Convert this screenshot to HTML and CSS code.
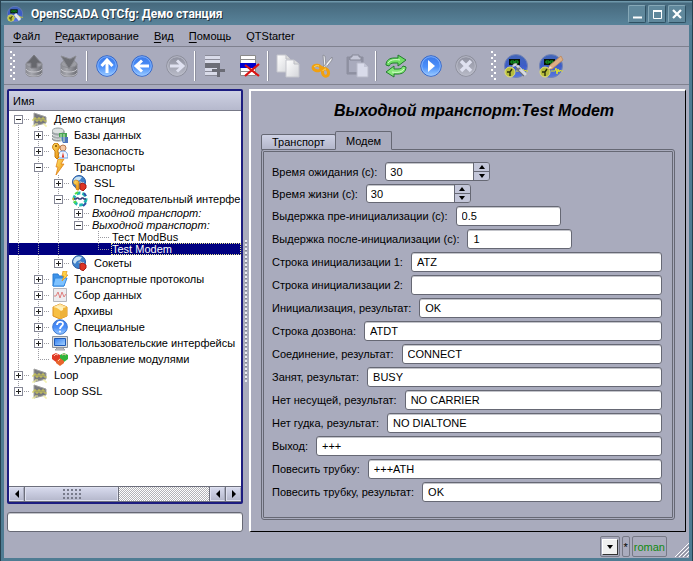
FILE: index.html
```html
<!DOCTYPE html>
<html lang="ru">
<head>
<meta charset="utf-8">
<title>OpenSCADA QTCfg: Демо станция</title>
<link rel="stylesheet" href="styles.css">
</head>
<body>
<svg class="defs" aria-hidden="true">
  <defs>
    <linearGradient id="blue" x1="0" y1="0" x2="0" y2="1"><stop offset="0" stop-color="#3a78e8"/><stop offset=".55" stop-color="#4c90fa"/><stop offset="1" stop-color="#9cccff"/></linearGradient>
    <linearGradient id="grey" x1="0" y1="0" x2="0" y2="1"><stop offset="0" stop-color="#8d8f9e"/><stop offset="1" stop-color="#b9bbc8"/></linearGradient>
    <linearGradient id="dark" x1="0" y1="0" x2="1" y2="0"><stop offset="0" stop-color="#8a8b92"/><stop offset=".35" stop-color="#a6a7ae"/><stop offset="1" stop-color="#6c6d74"/></linearGradient>
    <linearGradient id="paper" x1="0" y1="0" x2="1" y2="1"><stop offset="0" stop-color="#ffffff"/><stop offset="1" stop-color="#d4d5da"/></linearGradient>
    <linearGradient id="orb" x1="0" y1="0" x2="0" y2="1"><stop offset="0" stop-color="#4266b8"/><stop offset=".5" stop-color="#3c5cc8"/><stop offset="1" stop-color="#5878e0"/></linearGradient>
    <linearGradient id="gold" x1="0" y1="0" x2="1" y2="1"><stop offset="0" stop-color="#ffe46a"/><stop offset="1" stop-color="#e88a08"/></linearGradient>
    <linearGradient id="screen" x1="0" y1="0" x2="1" y2="1"><stop offset="0" stop-color="#2e7cf0"/><stop offset="1" stop-color="#a8d4ff"/></linearGradient>
  </defs>
  <symbol id="i-db" viewBox="0 0 22 22">
    <path d="M3 9v9c0 2 3 4 8 4s8-2 8-4V9z" fill="url(#dark)" stroke="#8b8c93"/>
    <path d="M3 14c1 2 4 3 8 3s7-1 8-3" fill="none" stroke="#c6c6cc"/><path d="M3 18c1 2 4 3 8 3s7-1 8-3" fill="none" stroke="#b4b4bb"/>
    <ellipse cx="11" cy="9" rx="8" ry="3.500" fill="#9c9da4" stroke="#8b8c93"/>
  </symbol>
  <symbol id="i-orb" viewBox="0 0 24 24">
    <circle cx="12" cy="12" r="11.500" fill="url(#orb)" stroke="#7384b4"/>
    <rect x="5" y="5" width="11" height="6" fill="#071407"/><path d="M7 7h3v2H7zM11 7h3v2h-3z" fill="none" stroke="#16a826"/>
    <path d="M12 17h4l1-3 1 6 1-5 1 3 1-2 1 1h2" fill="none" stroke="#e3e228"/>
    <circle cx="6" cy="18" r="5" fill="#b6bd3c" stroke="#e0df75"/><path d="M3 18h3l2-3M6 18v4" stroke="#28300c" stroke-width="1.400" fill="none"/>
  </symbol>
  <symbol id="i-station" viewBox="0 0 16 16">
    <path d="M2 2l12 4v6L2 15z" fill="#78797c" stroke="#a1a1a0"/><path d="M0 9h2V7l2 0v3h2V7h2v3h2V7h2v3h3" fill="none" stroke="#d0cc50"/><path d="M0 15h3v-2h3M11 13h2v2h2" fill="none" stroke="#f0ee9a"/>
  </symbol>
  <symbol id="i-bases" viewBox="0 0 16 16">
    <path d="M0 4v7c0 2 2 3 6 3s6-1 6-3V4z" fill="#a7acaf" stroke="#84898b"/><ellipse cx="6" cy="4" rx="6" ry="3" fill="#dde1e1" stroke="#96a0a0"/><path d="M0 7c2 3 9 3 12 0M0 10c2 3 9 3 12 0" fill="none" stroke="#e7eaea"/>
    <path d="M7 6h8v4H7z" fill="#48a353"/><path d="M8 10h8v6h-5z" fill="#4e76bd"/><path d="M9 7v7M12 7v8" stroke="#d1edc7"/>
  </symbol>
  <symbol id="i-security" viewBox="0 0 16 16">
    <circle cx="11" cy="5" r="3" fill="#f5c8a4" stroke="#b97a50"/><path d="M6 15c0-5 2-7 5-7s5 2 5 7z" fill="#edf4ff" stroke="#6d9fdd"/><path d="M11 9l-1 5 1 1 1-1z" fill="#e02d18"/>
    <path d="M4 0a4 4 0 0 0-2 7l1 1v6l2 2 2-2-1-2 1-1-1-2V7a4 4 0 0 0-2-7z" fill="url(#gold)" stroke="#c77a0a"/><circle cx="4" cy="3" r="1" fill="#7a4b00"/>
  </symbol>
  <symbol id="i-bolt" viewBox="0 0 16 16"><path d="M6 0h6L9 5h3L4 16l2-8H4z" fill="url(#gold)" stroke="#df8216" stroke-width=".800"/></symbol>
  <symbol id="i-globe" viewBox="0 0 16 16">
    <circle cx="7" cy="7" r="6.500" fill="#3d80cb" stroke="#28579c"/><path d="M2 4c2-3 5-3 8-2L8 5 5 6 3 9 1 7zM8 8l4-1c0 2-1 4-2 5z" fill="#c9e2f3"/>
    <path d="M8 9l3-1 3 2v3l-3 3-3-2z" fill="#dd3424" stroke="#a81c14"/><path d="M10 8c-1-2-3-1-3 0" stroke="#f1d0ad" fill="none"/>
  </symbol>
  <symbol id="i-sslglobe" viewBox="0 0 16 16"><use href="#i-globe"/><path d="M2 6a3 3 0 0 1 5 3v6H5l-1-1v-4a3 3 0 0 1-2-4z" fill="url(#gold)" stroke="#c27817" stroke-width=".700"/></symbol>
  <symbol id="i-serial" viewBox="0 0 16 16">
    <circle cx="8" cy="8" r="6" fill="#fff" stroke="#20b8b0" stroke-width="3" stroke-dasharray="4 2"/><path d="M3 3l3-2M2 12l2-2" stroke="#5adc42" stroke-width="2"/><path d="M12 2l2 3M11 15l3-3" stroke="#2b53a9" stroke-width="2"/><path d="M2 8h2l1-1h1l1 1h2l1-1h1l1 1h2" fill="none" stroke="#343474" stroke-width="1.500"/><path d="M0 8l2-2v4z" fill="#cfb627"/>
  </symbol>
  <symbol id="i-folder" viewBox="0 0 16 16"><path d="M1 3h5l1 2h5v10H1z" fill="#3e92e8" stroke="#287dd4"/><path d="M3 7h12l-3 8H1z" fill="#7ec2ff" stroke="#3388df"/><path d="M11 0h4l-1 4h2l-6 6 2-5h-2z" fill="#ffd247" stroke="#e19115" stroke-width=".700"/></symbol>
  <symbol id="i-chart" viewBox="0 0 16 16"><path d="M1.500 1.500h13v13h-13z" fill="#ececef" stroke="#b4b5bb"/><path d="M2 9h2l2-4 2 6 2-6 2 5 2-3" fill="none" stroke="#e08080"/></symbol>
  <symbol id="i-box" viewBox="0 0 16 16"><path d="M1 4l7-3 7 3v9l-7 3-7-3z" fill="#f7bf44" stroke="#da9020"/><path d="M1 4l7-3 7 3-7 2z" fill="#ffe5a0"/><path d="M8 7v9l7-3V4z" fill="#eeb23a"/><path d="M5 3l6 1v3l-2 1-5-4z" fill="#fff1bf"/></symbol>
  <symbol id="i-help" viewBox="0 0 16 16"><circle cx="8" cy="8" r="7.300" fill="url(#blue)" stroke="#3c78d0"/><path d="M5 6c0-4 6-4 6-1 0 2-3 2-3 5" fill="none" stroke="#fff" stroke-width="1.800"/><circle cx="8" cy="12.500" r="1" fill="#fff"/></symbol>
  <symbol id="i-screen" viewBox="0 0 16 16"><path d="M.5 1.500h15v11H.5z" fill="#d7dbdf" stroke="#8a9098"/><path d="M2.500 3.500h11v7h-11z" fill="url(#screen)" stroke="#1c59b8"/><path d="M5 13h6l2 2H3z" fill="#c9cbd0" stroke="#9a9ca2"/></symbol>
  <symbol id="i-modules" viewBox="0 0 16 16"><path d="M0 4l4-2 4 2v4L4 11 0 8z" fill="#e03a26"/><path d="M8 4l4-2 4 2v4l-4 3-4-3z" fill="#2fb43a"/><path d="M4 10l4-3 4 3v2l-4 3-4-3z" fill="#e8642c"/><path d="M2 5l2-2 2 1M10 4l2-1 2 1M6 10l2-2" stroke="#ffc6ae" fill="none"/></symbol>
</svg>

<div class="window">
  <header class="titlebar">
    <svg class="appicon"><use href="#i-orb"/><path d="M8 8l5 6" stroke="#e2e5ec" stroke-width="3"/></svg>
    <h1>OpenSCADA QTCfg: Демо станция</h1>
    <div class="winbtns">
      <button aria-label="Свернуть"><svg viewBox="0 0 16 16"><path d="M4 11.500h9" stroke="#fff" stroke-width="2"/></svg></button>
      <button aria-label="Развернуть"><svg viewBox="0 0 16 16"><path d="M4.500 4.500h8v8h-8z" fill="none" stroke="#fff"/><path d="M4 5h9" stroke="#fff" stroke-width="2"/></svg></button>
      <button aria-label="Закрыть"><svg viewBox="0 0 16 16"><path d="M4 4l8 8M12 4l-8 8" stroke="#fff" stroke-width="2.200"/></svg></button>
    </div>
  </header>

  <nav class="menubar">
    <button><u>Ф</u>айл</button><button><u>Р</u>едактирование</button><button><u>В</u>ид</button><button><u>П</u>омощь</button><button>QTStarter</button>
  </nav>

  <div class="toolbar">
    <i class="handle"></i>
    <button aria-label="Загрузить"><svg viewBox="0 0 22 22"><use href="#i-db"/><path d="M11 0l7 8h-4v5H8V8H4z" fill="#66676d" stroke="#7c7d83"/></svg></button>
    <button aria-label="Сохранить"><svg viewBox="0 0 22 22"><use href="#i-db"/><path d="M3 1l6 2 3 1 6-3-2 5-5 8-5-8z" fill="#6e6f75" stroke="#8b8c92"/></svg></button>
    <i class="sep"></i>
    <button aria-label="Вверх"><svg viewBox="0 0 22 22"><circle cx="11" cy="11" r="10.300" fill="url(#blue)" stroke="#3567c9"/><circle cx="11" cy="11" r="9.300" fill="none" stroke="#9ac5ff" stroke-opacity=".7"/><path d="M11 18V6M5.500 11L11 5l5.500 6" fill="none" stroke="#fff" stroke-width="3"/></svg></button>
    <button aria-label="Назад"><svg viewBox="0 0 22 22"><circle cx="11" cy="11" r="10.300" fill="url(#blue)" stroke="#3567c9"/><circle cx="11" cy="11" r="9.300" fill="none" stroke="#9ac5ff" stroke-opacity=".7"/><path d="M18 11H6M11 5.500L5 11l6 5.500" fill="none" stroke="#fff" stroke-width="3"/></svg></button>
    <button aria-label="Вперёд"><svg viewBox="0 0 22 22"><circle cx="11" cy="11" r="10.300" fill="url(#grey)" stroke="#8d8f9c"/><circle cx="11" cy="11" r="9.300" fill="none" stroke="#b9bbc9"/><path d="M4 11h12M11 5.500l6 5.500-6 5.500" fill="none" stroke="#dfe1f0" stroke-width="3"/></svg></button>
    <i class="sep"></i>
    <button aria-label="Добавить"><svg viewBox="0 0 22 22"><path d="M1 0h15v21H1z" fill="#d9dbe9"/><path d="M1 .5h15M1 4.500h15M1 16.500h15M1 20.500h15" stroke="#8b8c99"/><path d="M1 8h15v5H1z" fill="#6c6d77"/><path d="M8 15.500h13M14.500 9v13" stroke="#6b6c76" stroke-width="3"/></svg></button>
    <button aria-label="Удалить"><svg viewBox="0 0 22 22"><path d="M1.500 .5h15v20h-15zM1 4.500h15M1 16.500h15" fill="#fff" stroke="#8b8b8b"/><path d="M1 8h16v5H1z" fill="#0000cd"/><path d="M6 10l14 11M20 9L6 21" stroke="#dc1212" stroke-width="2.200"/></svg></button>
    <i class="sep"></i>
    <button aria-label="Копировать"><svg viewBox="0 0 22 22"><path d="M0 0h9l4 4v13H0z" fill="url(#paper)" stroke="#c5c6cd"/><path d="M9 0v4h4" fill="#ddd" stroke="#bcbdc4"/><path d="M9 5h8l5 4v13H9z" fill="url(#paper)" stroke="#c5c6cd"/><path d="M17 5v4h5" fill="#ddd" stroke="#bcbdc4"/></svg></button>
    <button aria-label="Вырезать"><svg viewBox="0 0 22 22"><path d="M11 0l2 1 1 10-2 3zM20 2l0 3-7 9-2-2z" fill="#f0f1f5" stroke="#858890" stroke-width=".8"/><ellipse cx="5" cy="13" rx="4" ry="2.800" fill="none" stroke="#f0a010" stroke-width="3" transform="rotate(10 5 13)"/><ellipse cx="13.500" cy="17.500" rx="3" ry="3.800" fill="none" stroke="#f0a010" stroke-width="3" transform="rotate(-15 13.500 17.500)"/><path d="M8 12l5 2" stroke="#f0a010" stroke-width="3"/><path d="M2 12c1-1 3-2 5-1M11 16c0-1 1-2 3-2" stroke="#ffdc60" fill="none"/></svg></button>
    <button aria-label="Вставить"><svg viewBox="0 0 22 22"><path d="M0 2h16v17H0z" fill="#9092a3" stroke="#8c8e9e"/><path d="M2 5h12v12H2z" fill="#a9abbd"/><path d="M5 0h7v2h2v3H3V2h2z" fill="#c5c7d7" stroke="#868897"/><path d="M10 8h7l4 4v10H10z" fill="#d9dbea" stroke="#b8bac9"/><path d="M17 8v4h4" fill="#c3c5d6"/></svg></button>
    <i class="sep"></i>
    <button aria-label="Обновить"><svg viewBox="0 0 22 22"><path d="M1 10c0-5 4-7 8-7h4V0l8 5-8 6V8H9c-3 0-4 1-5 3z" fill="#6fdc65" stroke="#217d2d"/><path d="M21 12c0 5-4 7-8 7H9v3l-8-5 8-6v3h4c3 0 4-1 5-3z" fill="#85e878" stroke="#217d2d"/><path d="M3 8c2-3 6-4 12-3M19 14c-2 3-6 4-12 3" stroke="#d9ffd0" fill="none"/></svg></button>
    <button aria-label="Запустить"><svg viewBox="0 0 22 22"><circle cx="11" cy="11" r="10.300" fill="url(#blue)" stroke="#3567c9"/><circle cx="11" cy="11" r="9.300" fill="none" stroke="#9ac5ff" stroke-opacity=".7"/><path d="M8 5l7 6-7 6z" fill="#fff"/></svg></button>
    <button aria-label="Остановить"><svg viewBox="0 0 22 22"><circle cx="11" cy="11" r="10.300" fill="url(#grey)" stroke="#8d8f9c"/><circle cx="11" cy="11" r="9.300" fill="none" stroke="#b9bbc9"/><path d="M6 6l10 10M16 6L6 16" stroke="#dfe1f0" stroke-width="3.500"/></svg></button>
    <i class="handle wide"></i>
    <button aria-label="Конфигуратор"><svg class="big" viewBox="0 0 24 24"><use href="#i-orb"/><path d="M13 13l8 8" stroke="#6e737b" stroke-width="4"/><path d="M9 13c-1-3 2-4 4-3l-1 2 2 2 2-1c1 2 0 3-1 3l6 6 2-2-9-9" fill="#d6d9de" stroke="#b8bcc4"/></svg></button>
    <button aria-label="Разработка"><svg class="big" viewBox="0 0 24 24"><use href="#i-orb"/><path d="M9 15l2-4L22 2l2 4-11 9z" fill="#dcae85" stroke="#bd875b" stroke-width=".800"/><path d="M9 15l2-3 2 2z" fill="#f3e3c6"/></svg></button>
  </div>

  <main class="content">
    <section class="left">
      <div class="treebox">
        <div class="treehead">Имя</div>
        <ul class="tree">
          <li><i class="g top"><b class="ex minus"></b></i><svg><use href="#i-station"/></svg><span>Демо станция</span></li>
          <li><i class="g"></i><i class="g h"><b class="ex plus"></b></i><svg><use href="#i-bases"/></svg><span>Базы данных</span></li>
          <li><i class="g"></i><i class="g h"><b class="ex plus"></b></i><svg><use href="#i-security"/></svg><span>Безопасность</span></li>
          <li><i class="g"></i><i class="g h"><b class="ex minus"></b></i><svg><use href="#i-bolt"/></svg><span>Транспорты</span></li>
          <li><i class="g"></i><i class="g"></i><i class="g h"><b class="ex plus"></b></i><svg><use href="#i-sslglobe"/></svg><span>SSL</span></li>
          <li><i class="g"></i><i class="g"></i><i class="g h"><b class="ex minus"></b></i><svg><use href="#i-serial"/></svg><span>Последовательный интерфе</span></li>
          <li class="low it"><i class="g"></i><i class="g"></i><i class="g"></i><i class="g h"><b class="ex plus"></b></i><span>Входной транспорт:</span></li>
          <li class="low it"><i class="g"></i><i class="g"></i><i class="g"></i><i class="g h end"><b class="ex minus"></b></i><span>Выходной транспорт:</span></li>
          <li class="low"><i class="g"></i><i class="g"></i><i class="g"></i><i class="g none"></i><i class="g h"></i><span>Тест ModBus</span></li>
          <li class="low sel"><i class="g"></i><i class="g"></i><i class="g"></i><i class="g none"></i><i class="g h end"></i><span>Test Modem</span></li>
          <li><i class="g"></i><i class="g"></i><i class="g h end"><b class="ex plus"></b></i><svg><use href="#i-globe"/></svg><span>Сокеты</span></li>
          <li><i class="g"></i><i class="g h"><b class="ex plus"></b></i><svg><use href="#i-folder"/></svg><span>Транспортные протоколы</span></li>
          <li><i class="g"></i><i class="g h"><b class="ex plus"></b></i><svg><use href="#i-chart"/></svg><span>Сбор данных</span></li>
          <li><i class="g"></i><i class="g h"><b class="ex plus"></b></i><svg><use href="#i-box"/></svg><span>Архивы</span></li>
          <li><i class="g"></i><i class="g h"><b class="ex plus"></b></i><svg><use href="#i-help"/></svg><span>Специальные</span></li>
          <li><i class="g"></i><i class="g h"><b class="ex plus"></b></i><svg><use href="#i-screen"/></svg><span>Пользовательские интерфейсы</span></li>
          <li><i class="g"></i><i class="g h end"></i><svg><use href="#i-modules"/></svg><span>Управление модулями</span></li>
          <li><i class="g h"><b class="ex plus"></b></i><svg><use href="#i-station"/></svg><span>Loop</span></li>
          <li><i class="g h end"><b class="ex plus"></b></i><svg><use href="#i-station"/></svg><span>Loop SSL</span></li>
        </ul>
        <div class="hscroll">
          <button class="sb" aria-label="Влево"><i class="tri l"></i></button>
          <div class="thumb"><i></i></div>
          <div class="track"></div>
          <button class="sb" aria-label="Влево"><i class="tri l"></i></button>
          <button class="sb" aria-label="Вправо"><i class="tri r"></i></button>
        </div>
      </div>
      <input class="search" type="text" aria-label="Поиск">
    </section>
    <div class="splitter"><i></i></div>
    <section class="page">
      <h2>Выходной транспорт:Test Modem</h2>
      <div class="tabs"><button class="tab">Транспорт</button><button class="tab on">Модем</button></div>
      <form class="pane">
        <div class="row spinrow"><label for="f1">Время ожидания (с):</label><div class="spin"><input id="f1" value="30"><div class="arrows"><button type="button" aria-label="Больше"><i class="tri u"></i></button><button type="button" aria-label="Меньше"><i class="tri d"></i></button></div></div></div>
        <div class="row spinrow"><label for="f2">Время жизни (с):</label><div class="spin"><input id="f2" value="30"><div class="arrows"><button type="button" aria-label="Больше"><i class="tri u"></i></button><button type="button" aria-label="Меньше"><i class="tri d"></i></button></div></div></div>
        <div class="row short"><label for="f3">Выдержка пре-инициализации (с):</label><input id="f3" value="0.5"></div>
        <div class="row short"><label for="f4">Выдержка после-инициализации (с):</label><input id="f4" value="1"></div>
        <div class="row"><label for="f5">Строка инициализации 1:</label><input id="f5" value="ATZ"></div>
        <div class="row"><label for="f6">Строка инициализации 2:</label><input id="f6" value=""></div>
        <div class="row"><label for="f7">Инициализация, результат:</label><input id="f7" value="OK"></div>
        <div class="row"><label for="f8">Строка дозвона:</label><input id="f8" value="ATDT"></div>
        <div class="row"><label for="f9">Соединение, результат:</label><input id="f9" value="CONNECT"></div>
        <div class="row"><label for="f10">Занят, результат:</label><input id="f10" value="BUSY"></div>
        <div class="row"><label for="f11">Нет несущей, результат:</label><input id="f11" value="NO CARRIER"></div>
        <div class="row"><label for="f12">Нет гудка, результат:</label><input id="f12" value="NO DIALTONE"></div>
        <div class="row"><label for="f13">Выход:</label><input id="f13" value="+++"></div>
        <div class="row"><label for="f14">Повесить трубку:</label><input id="f14" value="+++ATH"></div>
        <div class="row"><label for="f15">Повесить трубку, результат:</label><input id="f15" value="OK"></div>
      </form>
    </section>
  </main>

  <footer class="status">
    <div class="cell"><button class="drop" aria-label="Список"><i class="tri d"></i></button></div>
    <div class="cell">*</div>
    <div class="cell user">roman</div>
    <svg class="grip" viewBox="0 0 14 14"><path d="M0 14L14 0M4 14L14 4M8 14l6-6M12 14l2-2" stroke="#fff"/><path d="M2 14L14 2M6 14l8-8M10 14l4-4" stroke="#8a8c9a"/></svg>
  </footer>
</div>
</body>
</html>
```
FILE: styles.css
```css
* { box-sizing: border-box; }
body {
  margin: 0;
  font: 11px/14px "Liberation Sans", Arial, sans-serif;
  color: #000;
}
button, input { font: inherit; color: inherit; margin: 0; padding: 0; border: 0; background: none; border-radius: 0; min-width: 0; }
svg { display: block; flex: none; overflow: visible; }
.defs { position: absolute; width: 0; height: 0; }
i, b { display: block; flex: none; }

.window {
  min-height: 100vh;
  display: flex;
  flex-direction: column;
  background: #a9abbd;
  border: 4px solid #4f7c93;
  border-top: 0;
  outline: 1px solid #27414f;
  outline-offset: -1px;
}

.titlebar {
  height: 25px;
  margin: 0 -3px;
  padding: 2px 6px 0;
  display: flex;
  align-items: center;
  background: linear-gradient(#27414f 1px, #6e97aa 1px, #6e97aa 2px, #46697d 3px, #588299 24px);
}
.appicon { width: 16px; height: 16px; }
.titlebar h1 { margin: 0 0 0 8px; flex: 1; font: bold 12px/16px Roboto, sans-serif; color: #fff; text-shadow: 1px 1px 0 #20323d; white-space: nowrap; }
.winbtns { display: flex; gap: 2px; }
.winbtns button { width: 18px; height: 18px; border: 1px solid #86a8b7; border-right-color: #2f5062; border-bottom-color: #2f5062; border-radius: 2px; background: #60889c; }
.winbtns svg { width: 16px; height: 16px; }

.menubar { height: 22px; padding-left: 9px; display: flex; gap: 15px; align-items: center; border-bottom: 1px solid #7f818f; }
.menubar u { text-underline-offset: 2px; }

.toolbar { height: 38px; padding-left: 6px; display: flex; align-items: center; border-bottom: 1px solid #7f818f; }
.toolbar button { width: 35px; height: 36px; display: flex; align-items: center; justify-content: center; }
.toolbar svg { width: 22px; height: 22px; }
.toolbar svg.big { width: 24px; height: 24px; }
.sep { width: 2px; height: 30px; margin-right: 1px; background: #fff; border-right: 1px solid #8f91a0; }
.handle {
  width: 6px; height: 30px;
  background:
    repeating-linear-gradient(#fff 0 2px, transparent 2px 6px) 0 0 / 2px 100% no-repeat,
    repeating-linear-gradient(transparent 0 3px, #fff 3px 5px, transparent 5px 6px) 3px 0 / 2px 100% no-repeat;
}
.handle.wide { margin: 0 1px 0 8px; }

.content { flex: 1; display: flex; padding: 4px 3px 0; }
.left { flex: 0 0 236px; min-width: 0; display: flex; flex-direction: column; gap: 8px; }
.treebox { flex: 1; display: flex; flex-direction: column; border: 2px solid #1c1c80; border-radius: 2px; background: #fff; overflow: hidden; }
.treehead { height: 20px; padding: 3px 4px; background: linear-gradient(#ced1e3, #b6b9cd); border-bottom: 1px solid #777987; }
.tree { flex: 1; margin: 0; padding: 0; list-style: none; overflow: hidden; }
.tree li { height: 16px; display: flex; align-items: center; white-space: nowrap; }
.tree li.low { height: 12px; line-height: 12px; }
.tree svg { width: 16px; height: 16px; margin-left: 3px; }
.tree span { padding: 0 1px; margin-left: 5px; }
.tree .low span { margin-left: 2px; }
.it { font-style: italic; }
.tree .sel { background: #000080; color: #fff; }
.tree .sel span { flex: 1; height: 12px; outline: 1px dotted #e6e68c; outline-offset: -1px; }
.g {
  --v: repeating-linear-gradient(#9a9aa0 0 1px, transparent 1px 2px);
  --h: repeating-linear-gradient(90deg, #9a9aa0 0 1px, transparent 1px 2px);
  width: 20px; height: 100%;
  display: flex; align-items: center; padding-left: 5px;
  background: var(--v) 9px 0 / 1px 100% no-repeat;
}
.g.h { background: var(--v) 9px 0 / 1px 100% no-repeat, var(--h) 9px 50% / 11px 1px no-repeat; }
.g.end { background: var(--v) 9px 0 / 1px 50% no-repeat, var(--h) 9px 50% / 11px 1px no-repeat; }
.g.top { background: var(--v) 9px 100% / 1px 50% no-repeat, var(--h) 9px 50% / 11px 1px no-repeat; }
.g.none { background: none; }
.ex {
  width: 9px; height: 9px; border: 1px solid #858796;
  background: linear-gradient(#222, #222) 1px 3px / 5px 1px no-repeat, #fff;
}
.ex.plus { background: linear-gradient(#222, #222) 1px 3px / 5px 1px no-repeat, linear-gradient(#222, #222) 3px 1px / 1px 5px no-repeat, #fff; }

.hscroll { height: 16px; display: flex; background: #6d6f7c; border-top: 1px solid #6d6f7c; border-bottom: 1px solid #6d6f7c; gap: 1px; }
.sb { width: 15px; display: flex; align-items: center; justify-content: center; background: linear-gradient(#d6d9ec, #b6b9cd); border: 1px solid #dfe1f0; border-right-color: #a6a9bb; }
.thumb { flex: 0 0 93px; display: flex; align-items: center; justify-content: center; background: linear-gradient(#d6d9ec, #b6b9cd); border: 1px solid #dfe1f0; }
.thumb i { width: 18px; height: 11px; background: radial-gradient(circle at 1px 1px, #777a8a 1px, transparent 1px) 0 0 / 4px 4px; }
.track { flex: 1; background: repeating-conic-gradient(#b3b3b8 0 25%, #fff 0 50%) 0 0 / 2px 2px; }

.tri { width: 0; height: 0; border: 4px solid transparent; }
.tri.l { border-right-color: #000; border-left: 0; }
.tri.r { border-left-color: #000; border-right: 0; }
.tri.u { border: 3px solid transparent; border-bottom: 4px solid #000; border-top: 0; }
.tri.d { border: 3px solid transparent; border-top: 4px solid #000; border-bottom: 0; }

.search, .row > input, .spin { height: 20px; background: #fff; border: 1px solid #666874; border-radius: 3px; box-shadow: inset 0 1px 0 #c3c4ca; }
.search { width: 100%; padding: 0 5px; }

.splitter { width: 6px; display: flex; align-items: center; justify-content: center; }
.splitter i { width: 3px; height: 142px; background: repeating-linear-gradient(#e9eaf2 0 2px, #8a8c9a 2px 3px, transparent 3px 4px) 0 0 / 2px 100% no-repeat; }

.page { flex: 1; min-width: 0; display: flex; flex-direction: column; padding: 10px 10px 11px; border: 1px solid #000; border-top: 2px solid #fff; border-left: 2px solid #fff; }
.page h2 { margin: 0; padding-left: 12px; text-align: center; font-size: 16px; line-height: 20px; font-style: italic; }
.tabs { display: flex; align-items: flex-end; height: 19px; margin: 10px 0 -1px; }
.tab { height: 16px; padding: 0 10px; background: linear-gradient(#cfd2e5, #b3b6ca); border: 1px solid #666874; border-radius: 2px 2px 0 0; }
.tab.on { height: 19px; margin-left: -1px; background: #a9abbd; border-bottom-color: #a9abbd; z-index: 1; }
.pane { flex: 1; border: 3px double #666874; border-radius: 3px; padding: 10px 10px 15px 8px; display: flex; flex-direction: column; gap: 3px; }
.row { display: flex; align-items: center; gap: 8px; height: 20px; }
.row > input { flex: 1; padding: 0 5px; }
.short > input { flex: 0 0 105px; }
.spinrow { height: 19px; }
.spin { width: 105px; height: 19px; display: flex; overflow: hidden; }
.spin input { flex: 1; padding: 0 4px; }
.arrows { width: 16px; display: flex; flex-direction: column; gap: 1px; background: #666874; border-left: 1px solid #666874; }
.arrows button { flex: 1; display: flex; align-items: center; justify-content: center; background: #c3c6d9; }

.status { height: 26px; padding: 4px 0 1px; display: flex; align-items: stretch; justify-content: flex-end; gap: 2px; }
.cell { display: flex; align-items: center; justify-content: center; min-width: 8px; padding: 0 1px; border: 1px solid #777987; border-radius: 2px; }
.user { color: #118a11; }
.drop { width: 16px; height: 16px; background: #efefef; border: 1px solid #fff; border-right-color: #333; border-bottom-color: #333; display: flex; align-items: center; justify-content: center; }
.grip { width: 14px; height: 14px; margin-left: 6px; align-self: flex-end; }
```
